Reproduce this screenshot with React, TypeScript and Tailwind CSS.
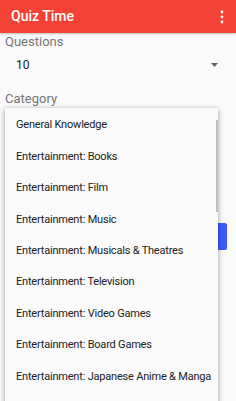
import React from "react";

const items = [
  "General Knowledge",
  "Entertainment: Books",
  "Entertainment: Film",
  "Entertainment: Music",
  "Entertainment: Musicals & Theatres",
  "Entertainment: Television",
  "Entertainment: Video Games",
  "Entertainment: Board Games",
  "Entertainment: Japanese Anime & Manga",
];

export default function App() {
  return (
    <div
      className="relative w-[236px] h-[401px] overflow-hidden bg-[#fafafa]"
      style={{ fontFamily: "Roboto, 'Noto Sans', sans-serif" }}
    >
      <div className="h-[33px] bg-[#f44336] flex items-center justify-between pl-[11px] pr-[12px] shadow-[0_1px_2px_rgba(0,0,0,0.25)]">
        <span className="text-white text-[14px] font-medium">Quiz Time</span>
        <svg width="4" height="14" viewBox="0 0 4 14">
          <circle cx="2" cy="2" r="1.4" fill="#fff" />
          <circle cx="2" cy="7" r="1.4" fill="#fff" />
          <circle cx="2" cy="12" r="1.4" fill="#fff" />
        </svg>
      </div>
      <div className="px-[5px]">
        <div className="text-[#757575] text-[13px] leading-[16px] mt-[1px]">Questions</div>
        <div className="flex items-center justify-between h-[34px] pl-[11px] pr-[13px] -mt-[2px]">
          <span className="text-[#212121] text-[12px]">10</span>
          <svg width="7" height="4" viewBox="0 0 7 4">
            <path d="M0 0H7L3.5 4Z" fill="#616161" />
          </svg>
        </div>
        <div className="text-[#757575] text-[13px] leading-[16px] mt-[9px]">Category</div>
        <div className="mt-[116px] h-[27px] w-[222px] bg-[#3d5afe] rounded-[2px]" />
      </div>
      <div className="absolute left-[5px] top-[108px] w-[213px] h-[320px] pt-[1px] bg-[#fafafa] shadow-[0_2px_6px_rgba(0,0,0,0.3),0_0_4px_rgba(0,0,0,0.12)]">
        <div className="absolute right-0 top-[12px] w-[2px] h-[92px] bg-[#bdbdbd]" />
        {items.map((t) => (
          <div
            key={t}
            className="h-[31.4px] flex items-center pl-[11px] pt-[2px] text-[11px] tracking-[-0.2px] text-[#212121] whitespace-nowrap"
          >
            {t}
          </div>
        ))}
      </div>
    </div>
  );
}
